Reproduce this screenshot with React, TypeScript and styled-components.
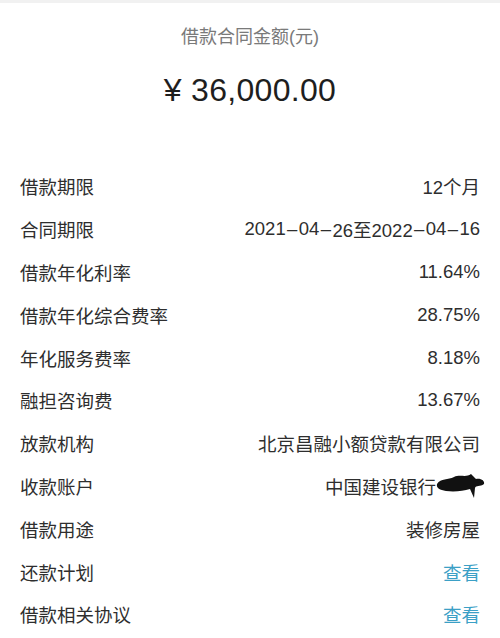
import React from 'react';
import styled, { createGlobalStyle } from 'styled-components';

const Global = createGlobalStyle`
  html, body {
    margin: 0;
    padding: 0;
    background: #fff;
  }
  body {
    font-family: "Liberation Sans", "Noto Sans CJK SC", sans-serif;
  }
`;

const Page = styled.div`
  width: 500px;
  border-top: 3px solid #f1f1f1;
  background: #fff;
`;

const Header = styled.section`
  display: flex;
  flex-direction: column;
  align-items: center;
  padding: 22px 0 55px;
`;

const Title = styled.div`
  font-size: 18px;
  line-height: 24px;
  color: #7a7a7a;
`;

const Amount = styled.div`
  margin-top: 21px;
  font-size: 32px;
  line-height: 40px;
  color: #1e1e1e;
  letter-spacing: 0.3px;
`;

const List = styled.section`
  padding: 0 20px;
`;

const Row = styled.div`
  display: flex;
  justify-content: space-between;
  align-items: center;
  height: 42.8px;
  font-size: 18.5px;
  color: #2e2e2e;
`;

const Label = styled.span`
  color: #2e2e2e;
`;

const Value = styled.span<{ $link?: boolean }>`
  display: flex;
  align-items: center;
  white-space: pre;
  color: ${(p) => (p.$link ? '#3ba0c6' : '#2e2e2e')};
`;

const Dash = styled.span`
  margin: 0 1.4px;
`;

const Mask = () => (
  <svg width="50" height="30" viewBox="0 0 50 30" style={{ marginRight: -6 }}>
    <path
      d="M1 13 C5 7 12 9 18 6 C24 3 30 7 35 3 L40 8 C45 7 49 10 48 13 C44 16 40 14 39 17 L38 27 L34 18 C27 20 19 21 10 20 C4 19 0 17 1 13 Z"
      fill="#111"
    />
  </svg>
);

const dateText = (s: string) =>
  s.split('-').map((part, i) => (
    <React.Fragment key={i}>
      {i > 0 && <Dash>–</Dash>}
      {part}
    </React.Fragment>
  ));

const rows: { label: string; value: React.ReactNode; link?: boolean }[] = [
  { label: '借款期限', value: '12个月' },
  {
    label: '合同期限',
    value: (
      <>
        {dateText('2021-04-26')}至{dateText('2022-04-16')}
      </>
    ),
  },
  { label: '借款年化利率', value: '11.64%' },
  { label: '借款年化综合费率', value: '28.75%' },
  { label: '年化服务费率', value: '8.18%' },
  { label: '融担咨询费', value: '13.67%' },
  { label: '放款机构', value: '北京昌融小额贷款有限公司' },
  {
    label: '收款账户',
    value: (
      <>
        中国建设银行
        <Mask />
      </>
    ),
  },
  { label: '借款用途', value: '装修房屋' },
  { label: '还款计划', value: '查看', link: true },
  { label: '借款相关协议', value: '查看', link: true },
];

export default function App() {
  return (
    <Page>
      <Global />
      <Header>
        <Title>借款合同金额(元)</Title>
        <Amount>¥ 36,000.00</Amount>
      </Header>
      <List>
        {rows.map((r) => (
          <Row key={r.label}>
            <Label>{r.label}</Label>
            <Value $link={r.link}>{r.value}</Value>
          </Row>
        ))}
      </List>
    </Page>
  );
}
